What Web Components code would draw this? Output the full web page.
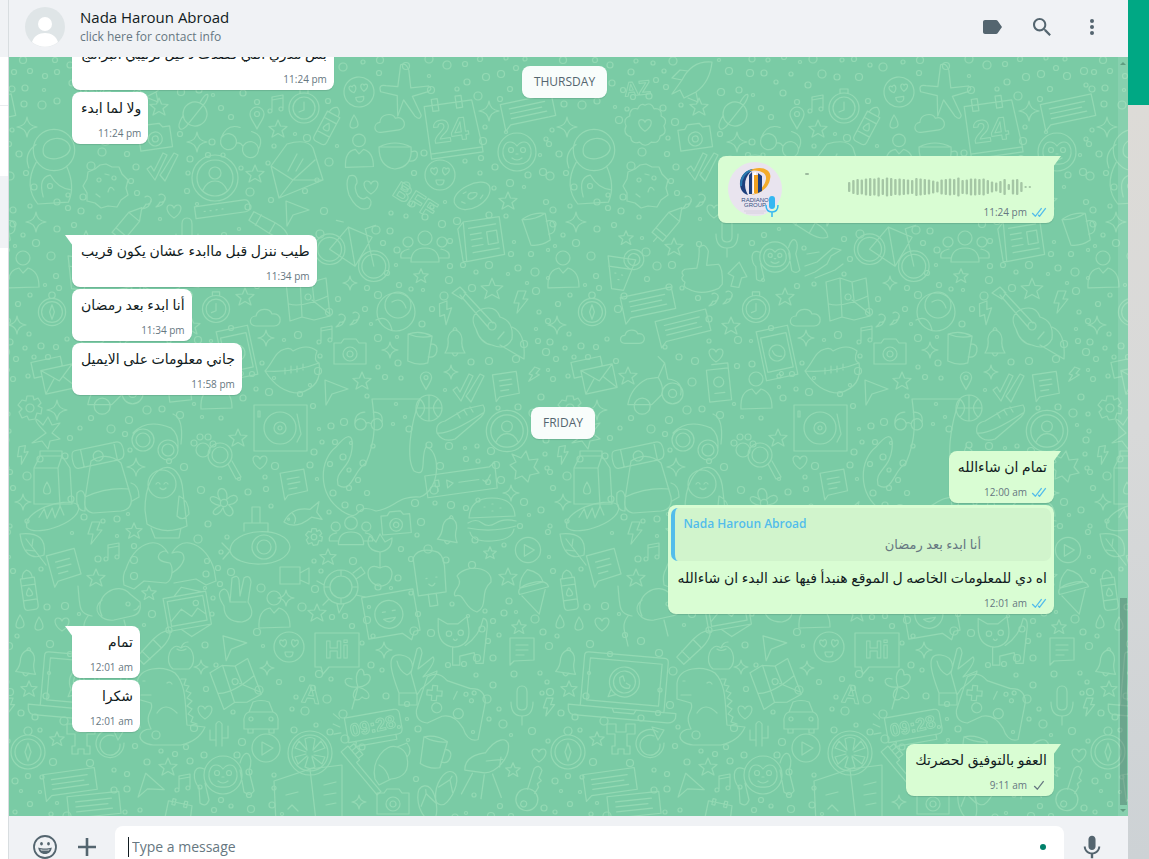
<!DOCTYPE html>
<html lang="en">
<head>
<meta charset="utf-8">
<meta name="viewport" content="width=device-width, initial-scale=1">
<title>Chat</title>
<style>
    body {
        margin: 0;
        overflow: hidden;
        font-family: "Open Sans", "Noto Sans", "DejaVu Sans", sans-serif;
        color: #111b21;
    }
</style>
</head>
<body>
<chat-app>
    <chat-header slot="header" name="Nada Haroun Abroad" info="click here for contact info"></chat-header>

    <chat-message time="11:24 pm">بس مدري اللي قصدت دخيل ترتيبي البرامج</chat-message>
    <chat-message time="11:24 pm">ولا لما ابدء</chat-message>
    <voice-message time="11:24 pm"></voice-message>
    <chat-message time="11:34 pm" first>طيب ننزل قبل ماابدء عشان يكون قريب</chat-message>
    <chat-message time="11:34 pm">أنا ابدء بعد رمضان</chat-message>
    <chat-message time="11:58 pm">جاني معلومات على الايميل</chat-message>
    <day-chip>FRIDAY</day-chip>
    <chat-message time="12:00 am" status="read" out first>تمام ان شاءالله</chat-message>
    <chat-message time="12:01 am" status="read" out>
        <quoted-message slot="quote" author="Nada Haroun Abroad">أنا ابدء بعد رمضان</quoted-message>
        اه دي للمعلومات الخاصه ل الموقع هنبدأ فيها عند البدء ان شاءالله
    </chat-message>
    <chat-message time="12:01 am" first>تمام</chat-message>
    <chat-message time="12:01 am">شكرا</chat-message>
    <chat-message time="9:11 am" status="sent" out first>العفو بالتوفيق لحضرتك</chat-message>

    <day-chip slot="sticky">THURSDAY</day-chip>
    <chat-composer slot="footer"></chat-composer>
</chat-app>

<script>
const template = html => {
    const el = document.createElement('template');
    el.innerHTML = html;
    return el;
};

class BaseElement extends HTMLElement {
    constructor() {
        super();
        this.attachShadow({ mode: 'open' });
        this.shadowRoot.appendChild(this.constructor.template.content.cloneNode(true));
    }
    $(selector) {
        return this.shadowRoot.querySelector(selector);
    }
}

/* ---------- icons ---------- */

const ICONS = {
    label: [24, 24, '<path d="M17.6 5.8C17.3 5.3 16.7 5 16 5H5c-1.1 0-2 .9-2 2v10c0 1.1.9 2 2 2h11c.7 0 1.3-.3 1.6-.8L22 12z"/>'],
    search: [24, 24, '<path d="M15.9 14.3H15l-.3-.3c1-1.1 1.6-2.7 1.6-4.3 0-3.7-3-6.7-6.7-6.7S3 6 3 9.7s3 6.7 6.7 6.7c1.6 0 3.2-.6 4.3-1.6l.3.3v.8l5.1 5.1 1.5-1.5-5-5.2zm-6.2 0c-2.6 0-4.6-2.1-4.6-4.6s2.1-4.6 4.6-4.6 4.6 2.1 4.6 4.6-2 4.6-4.6 4.6z"/>'],
    menu: [24, 24, '<circle cx="12" cy="6" r="2"/><circle cx="12" cy="12" r="2"/><circle cx="12" cy="18" r="2"/>'],
    smile: [24, 24, '<circle cx="12" cy="12" r="11" fill="none" stroke="currentColor" stroke-width="1.8"/><ellipse cx="8.5" cy="8.8" rx="1.4" ry="1.8"/><ellipse cx="15.5" cy="8.8" rx="1.4" ry="1.8"/><path fill-rule="evenodd" d="M5.3 12.5c2 .8 4.3 1.1 6.7 1.1s4.7-.3 6.7-1.1c0 3.8-3 6.5-6.7 6.5s-6.7-2.7-6.7-6.5zm2 1.8.8 1.2h7.8l.8-1.2c-3 .7-6.4.7-9.4 0z"/>'],
    plus: [24, 24, '<path d="M10.7 3h2.6v7.7H21v2.6h-7.7V21h-2.6v-7.7H3v-2.6h7.7z"/>'],
    mic: [24, 24, '<path d="M12 14.94c2 0 3.53-1.53 3.53-3.53V4.35C15.53 2.35 14 .82 12 .82S8.47 2.35 8.47 4.35v7.06c0 2 1.53 3.53 3.53 3.53zm6.24-3.53c0 3.53-2.94 6-6.24 6s-6.24-2.47-6.24-6h-2c0 4 3.18 7.3 7.06 7.89v3.88h2.36V19.3c3.88-.59 7.06-3.89 7.06-7.89z"/>'],
    read: [16, 15, '<path d="M15.01 3.316l-.478-.372a.365.365 0 0 0-.51.063L8.666 9.879a.32.32 0 0 1-.484.033l-.358-.325a.319.319 0 0 0-.484.032l-.378.483a.418.418 0 0 0 .036.541l1.32 1.266c.143.14.361.125.484-.033l6.272-8.048a.366.366 0 0 0-.064-.512zm-4.1 0l-.478-.372a.365.365 0 0 0-.51.063L4.566 9.879a.32.32 0 0 1-.484.033L1.891 7.769a.366.366 0 0 0-.515.006l-.423.433a.364.364 0 0 0 .006.514l3.258 3.185c.143.14.361.125.484-.033l6.272-8.048a.365.365 0 0 0-.063-.51z"/>'],
    sent: [16, 15, '<path transform="translate(2)" d="M10.91 3.316l-.478-.372a.365.365 0 0 0-.51.063L4.566 9.879a.32.32 0 0 1-.484.033L1.891 7.769a.366.366 0 0 0-.515.006l-.423.433a.364.364 0 0 0 .006.514l3.258 3.185c.143.14.361.125.484-.033l6.272-8.048a.365.365 0 0 0-.063-.51z"/>'],
};

class ChatIcon extends BaseElement {
    static template = template(/*html*/`
<style>
    :host { display: inline-flex; }
    svg { display: block; fill: currentColor; }
</style>
<svg aria-hidden="true"></svg>
`);
    connectedCallback() {
        const [w, h, body] = ICONS[this.getAttribute('name')];
        const svg = this.$('svg');
        svg.setAttribute('viewBox', `0 0 ${w} ${h}`);
        svg.setAttribute('width', w);
        svg.setAttribute('height', h);
        svg.innerHTML = body;
    }
}

/* ---------- wallpaper ---------- */

const STAR = 'M0-9 2.5-3 9-2.5 4 1.8 6 8 0 4.5-6 8-4 1.8-9-2.5-2.5-3z';
const HEART = 'M0 7C-9 1-8-6-4-6-1-6 0-3 0-3S1-6 4-6C8-6 9 1 0 7z';
const CIRCLE = (x, y, r) => `M${x - r} ${y}a${r} ${r} 0 1 0 ${2 * r} 0a${r} ${r} 0 1 0 ${-2 * r} 0`;
const FACE = CIRCLE(0, 0, 15) + 'M-5 0C-12-4-9-9-6-6-4-10 0-5-5 0zM5 0C0-5 4-10 6-6 9-9 12-4 5 0zM-4 5H4Q4 10 0 10T-4 5z';
const MONKEY = CIRCLE(0, 0, 19) + 'M0 12C-18 14-17-10-7-10Q-3-10 0-6 3-10 7-10C17-10 18 14 0 12z' +
    CIRCLE(-6, -2, 2.5) + CIRCLE(6, -2, 2.5) + 'M-5 6Q0 10 5 6M-1 2h2';

// each drawing is centred on 0,0
const DOODLES = {
    star: STAR,
    spark: 'M0-10Q1-1 10 0 1 1 0 10-1 1-10 0-1-1 0-10z',
    heart: HEART,
    drop: 'M0-7Q8 5 0 6T0-7z',
    bolt: 'M-3-11H5L2-3H7L-4 11-2 1H-7z',
    pin: 'M0 12C-3 5-7 2-7-3a7 7 0 0 1 14 0C7 2 3 5 0 12z' + CIRCLE(0, -3, 2.5),
    music: 'M-4 6V-7L7-9V4M-4-4 7-6' + CIRCLE(-6, 7, 2) + CIRCLE(5, 5, 2),
    watch: CIRCLE(0, 0, 15) + CIRCLE(0, 0, 11) + 'M0-6V2L-5 4M-4-15V-19H4V-15',
    compass: CIRCLE(0, 0, 17) + CIRCLE(0, 0, 13) + CIRCLE(0, -21, 4) + 'M0-9 3 0 0 9-3 0z',
    planet: CIRCLE(0, 0, 12) + 'M-11-4C-26 6-20 12-10 6L14-6C24-13 20-16 9-8',
    bottle: 'M-7-12H7V16Q7 20 3 20H-3Q-7 20-7 16zM-5-12Q-5-18 0-20 5-18 5-12M-7-5H7M-7 10H7M0-2Q6 6 0 6T0-2z',
    face: FACE,
    plane: 'M-3 25-7 5-24 4Q-28-3-20-3L-8-4-9-26Q-4-30 0-22L5-5 22-10Q28-8 22-4L8 3 20 20Q20 26 14 22L0 8z',
    cloud: 'M-10 8C-18 8-17-2-10-2-8-11 4-10 6-4 16-6 17 8 8 8z',
    calendar: 'M-24-22 24-22 28 26H-24zM-24 26V31H28V26M-16-28h6v12h-6zM8-28h6v12H8z',
    note: 'M-26-11H26V11H-20L-26 16zM-18-5H18M-18 0H14M-18 5H18',
    memo: 'M-12-12H12V10L-8 11-12 15zM-6-5H6M-6 0H6M-6 5H2',
    glasses: CIRCLE(-13, 4, 8) + CIRCLE(10, 8, 8) + 'M-5 4Q-1 2 2 6M-21 2Q-18-14-4-12M18 6Q22-8 8-10',
    envelope: 'M-24-2-8-24Q12-30 18-20L28 12-16 30zM-24-2-2 12 20-8M-16 30-2 12 28 12M-7 3 2-14M1 3 8-9',
    cup: 'M-18-8H14Q16 12-2 14-18 12-18-8zM14-3Q22-6 20 2 18 7 12 6M-18-8Q-2-16 14-8',
    person: CIRCLE(0, -14, 7) + 'M-15 16Q-16-2-4-4L0 1 5-4Q16-1 16 15z',
    group: CIRCLE(0, -10, 7) + CIRCLE(-17, -6, 5) + CIRCLE(17, -6, 5) + 'M-14 14Q-14 0 0 0T14 14zM-14 10H-24Q-26 3-16 1M14 10H24Q26 3 16 1',
    donut: 'M-18 4C-22-10 14-20 19-8 22 8-12 20-18 4zM-4 0Q-4-5 2-4 8-4 4 0-2 4-4 0zM-11 3l3 2M8 3l3-3M-8-5l3-1',
    handset: 'M-11-17Q-3-20-3-10-7-6-2 3 3 8 7 4 14 8 9 15-2 20-11 2-15-10-11-17z',
    monkey: MONKEY,
    monkeyHands: MONKEY + 'M-19-6C-32-12-30 8-24 12L-23 28Q-17 33-14 25L-18 8M17-12C22-30 32-20 26-4L31 16Q27 22 21 17L17-5',
    astronaut: CIRCLE(0, 0, 23) + 'M-12 2C-14-16 16-18 18-2 16 12-12 14-12 2zM-20 14Q-34 40-18 60L16 58Q24 40 14 18M-28 20Q-34 4-20-6M-12 52Q-18 30-4 28 4 42 18 44',
    cookie: 'M0-22 6-19 13-19 16-12 22-6 20 2 22 9 15 14 11 21 2 20-5 22-11 17-19 15-19 7-23 0-19-7-18-14-11-17-6-21z' + CIRCLE(-7, -6, 2) + CIRCLE(8, -8, 2) + 'M2 6Q4-2 8 4M-10 8l4 3M-1-12l4 1',
    badge: 'M0-22Q7-26 10-18 19-19 18-10 26-6 21 1 25 10 17 12 16 21 7 19 0 26-6 19-15 22-16 13-25 10-21 1-25-7-17-10-17-20-8-18-5-25 0-22z' + HEART,
    camera: 'M-16-9H-9L-6-13H6L9-9H16V12H-16z' + CIRCLE(0, 2, 7) + CIRCLE(0, 2, 3),
    rocket: 'M-20 14-10 0Q0-20 20-18 18 2 4 12L-8 18-12 10zM-10 0-20-2-12-10-4-9M4 12 6 22-4 18',
    profile: CIRCLE(0, 0, 23) + CIRCLE(0, 0, 18) + CIRCLE(0, -5, 6) + 'M-12 12Q-8 3 0 3T12 12',
    ruler: 'M-27-6H23Q28-6 28 0T23 6H-27zM-18 0h1M-12 0h1M-6 0h1M0 0h1',
    send: 'M-10-12 13-3-3 2-9 13z',
    bicycle: CIRCLE(-24, -8, 18) + CIRCLE(-24, -8, 14) + CIRCLE(28, 12, 18) + CIRCLE(28, 12, 14) + 'M-24-8-2-34 26-22 6 12-24-8M-2-34 6 12M28 12 18-32 30-36M-8-40-16-42',
    news: 'M-22-20 18-26 24 16-18 24zM-16-13 14-18M-14-6-2-8M-13 0-1-2M-12 7 0 5M4-9 15-11 17 3 6 5zM-11 14 18 9M-22-20-28-12-22 24H-18',
    mug: 'M-12-13Q0-18 12-13L10 14Q0 18-10 14zM-12-13Q0-9 12-13M11-5Q19-6 18 2 17 9 10 8',
    pencil: 'M-18 7-18-7 8-7 20 0 8 7zM8-7V7M-12-7V7M-18 0H-24',
    quotes: 'M-9-5a4 4 0 1 1 1 7Q-9 5-12 7-4 6-3-2M5-7a4 4 0 1 1 1 7Q5 3 2 5 10 4 11-4',
    checks: 'M-16 2-12-1-9 4 0-14 4-12-8 13zM-3 8 0 4 11-14 15-12 2 14z',
    cocktail: 'M-16-14H12L4 18H-8zM-14-4H9' + CIRCLE(10, -14, 10) + CIRCLE(10, -14, 6) + 'M-7 2h1M0 3h1M-3 8h1',
    thumb: 'M-14-2H-2Q2-14 2-22 8-28 11-18L8-4H20Q24 0 22 16L18 20Q0 26-12 18-18 16-15 11-20 7-16 4-19 0-14-2z',
    arrowUp: 'M0-13 10 0 5 2 4 12H-4L-3 2-9 0z',
    mic: 'M-5-13Q-5-19 0-19T5-13V0Q5 5 0 5T-5 0zM-11-3Q-11 11 0 11T11-3M0 11V20',
    wrench: 'M-18 4-6 0 10-14 18-12 8-6 4 2-8 10-18 14M-16-8-4-10M-8 16 12 8 20 2',
    map: 'M-20-18-6-22 6-18 20-22 24 16 8 20-4 17-16 21zM-17 4Q-4 8 22-4M-6-22-4 17M6-18 8 0M6 0 24 14' + CIRCLE(2, -3, 3),
    cap: CIRCLE(0, 0, 19) + CIRCLE(2, -7, 13) + 'M-20 8Q-8 2-4 18M-4-10Q6-16 10-4',
    guitar: 'M-38-30-30-36-24-30-28-24zM-30-28-2 4M-26-31 3 0M-14 6Q-22-8-8-14 6-18 10-6 24-2 22 16 16 28 2 22-10 20-14 6zM22 4Q36 10 34 36L10 22' + CIRCLE(2, 3, 4) + 'M8 16 14 9',
    phone: 'M-16-25H16V25H-16zM-13-18H13V17H-13z' + CIRCLE(0, 21, 2) + CIRCLE(0, 0, 8) + 'M-4-3Q-3 4 4 4',
    lips: 'M-28 6C-20-2-18-14-8-16Q-3-18 0-14 14-22 24-14 20-4 26-2 30 22 6 28-14 28-28 6zM-28 6Q0 8 26-2M-8 3v6M-2 1v7M4 1v6M10-1v6',
    mail: 'M-16-12H16V12H-16zM-16-12 0 2 16-12M-16 12-5-1M16 12 5-1M-16-6H-24V-22H6V-12',
    scooter: 'M-34 22Q-30 0-10-10L4-12Q12 0 8 10L-4 22zM4-12 12-30 4-38M12-30 16-10Q36-8 32 10' + CIRCLE(-16, 24, 10) + CIRCLE(22, 8, 13) + CIRCLE(22, 8, 5),
    card: 'M-11-16H11V16H-11zM-5-21H11V-16' + CIRCLE(0, -3, 5) + 'M-5 8H5',
    bell: 'M-10 10Q-6 4-7-4-6-12 0-13 6-12 7-4 6 4 10 10zM-3 10Q0 16 3 10M-2-13Q0-18 2-13',
    ball: CIRCLE(0, 0, 13) + 'M-13 0H13M0-13V13M-9-9Q0 0-9 9M9-9Q0 0 9 9',
    sneaker: 'M-24 10Q-26 0-16-2L4-14 22-18Q26-12 20-6L-6 16Q-18 20-24 10zM-24 10Q-12 12 22-10M-4-10l3 5M3-13l3 5M9-16l3 5',
    gear: CIRCLE(0, 0, 4) + 'M-3-12H3L4-8 8-10 11-5 8-2 12 0 11 6 7 5 5 11-1 12-3 8-8 10-11 4-8 1-12-3-8-8-4-7z',
    headset: CIRCLE(-14, 4, 11) + CIRCLE(-14, 4, 7) + CIRCLE(11, 14, 10) + CIRCLE(11, 14, 6) + 'M-24-3Q-10-18 14-8M14-8Q22-2 21 12M16-22Q27-18 24 8',
    turntable: 'M-27-23H26V23H-27z' + CIRCLE(-1, 0, 16) + CIRCLE(-1, 0, 6) + CIRCLE(-1, 0, 2) + 'M16-14 20 6 16 14M-23-17h2v6h-2z',
    octopus: 'M-58 42C-84 24-80-10-64-22-56-32-46-40-48-20-50 0-66 2-62 16-48 26-46 0-34-6-22-34-26-54-28-70H20C10-44 6-10 14 2 28 10 20-12 26-22 40-20 42 20 20 28-2 26-6 40-24 42-48 32-36 56-58 42z',
    milk: 'M-18-14-12-26H10L18-14 20 22H-18zM-18-14H6L8 24M6-14 10-26M-12-26V-31H10V-26M-5 0Q2 12-5 12T-5 0z',
    backpack: 'M-16-22Q0-32 14-20L24 14Q26 26 14 28L-14 30Q-24 28-22 16zM-22 14Q0 4 22 6M-30 10Q-24 4-22 14V28Q-32 28-30 10zM24 0Q32 2 32 14L25 18',
    roll: 'M-22-9H20Q26-9 26 0T20 9H-22Q-26 9-26 0T-22-9zM-16-9V9M18-9V9' + CIRCLE(0, 1, 5),
    penguin: 'M-20 10C-20-40 16-46 18-8L22 26Q0 36-18 24zM-14 28-10 38H14L16 28M14-4Q24 0 24 14 18 22 12 16z' + CIRCLE(-3, -16, 14) + 'M-9-16q2-3 4 0M-1-16q2-3 4 0M-5-12q3 3 6 0',
    flower: CIRCLE(0, 0, 4) + 'M-4-3C-14-18 6-22 3-4 14-16 22 0 5 2 18 12 2 22-1 5-8 20-20 10-4 3-22 0-16-14-4-3z',
    magnifier: CIRCLE(0, 0, 12) + CIRCLE(0, 0, 8) + 'M8 9 16 24 21 22 12 6',
    paw: CIRCLE(0, 4, 7) + CIRCLE(-9, -3, 3) + CIRCLE(-3, -9, 3) + CIRCLE(5, -9, 3) + CIRCLE(10, -2, 3),
    bread: 'M-27 8C-30-8 12-20 26-10 32 6-18 20-27 8zM-14-1-8-9-6 1 0-9 2 1 8-10 11-1',
    submarine: 'M-30 4C-30-20 28-22 30 0 28 22-26 22-30 4zM-16-16V-24H8V-16M-8-24V-40H0V-24M-30 4-38-4M-30 4-37 12' + CIRCLE(4, 0, 12) + CIRCLE(4, 0, 7),
    fish: 'M-18 4Q-8-10 10-4L20-10 16 0 20 8 10 4Q-8 14-18 4zM-8-3Q-4 2-8 7' + CIRCLE(-13, 2, 1),
    burger: 'M-23-2Q-22-22 0-22T23-4zM-24 3Q-16-2-10 3T4 3 24 1M-24 8Q0 13 24 6M-22 12Q-20 22 0 21T22 9M-8-13h1M0-16h1M8-12h1M0-9h1',
    voice: 'M-35-11H30L36-15 35 11H-35zM-26-5h4v6h-4zM-24 1V6M-14-4-8 0-14 4zM-2 0H18M22 1l3 3 5-7',
    splash: 'M-14-2-8-5-12-13-3-9 2-16 5-7 14-8 10 0 15 6 6 8 4 15-2 9-9 12-8 4z',
    leaf: 'M-12-13Q16-16 12 8-8 16-12-13zM-6-8 14 18M0-1 1-8M3 4-6 3',
    hands: 'M-2-10C-14-30-36-18-44 6Q-48 12-46 22L-36 26-26 18-4 20C2 18 4 6 0 0Q-16-2-10-10-4-14-2-10zM2-10C14-30 36-18 44 6L46 18 36 22 26 16 4 20M2-10Q14-14 14-4 12 4 2 10',
    tulip: 'M0-8C-16-10-12-22-10-24L-4-18 0-26 5-18 12-22Q12-10 0-8zM0-8V8M0 8C-16 0-16 24 0 26 16 26 16 0 0 8z',
    icepop: 'M-14-22Q-8-32 8-26 16-24 16-10L14 16H-14zM-4 16V28H4V16M-4 0h1M6 0h1M-2 6q3 4 6 0',
    blob: 'M-16-14C-8-26 20-24 18-8 6 2 16 16 4 22-10 18-8 2-18 6-22 0-8-4-16-14z',
    elephant: 'M-36-20C-34 0-36 8-22 10M-12 10C-22-10 4-26 16-12L26-4Q28 8 18 10L0 14C-12 16-24 4-12-6M-26 10C-34 20-28 28-26 40M10 14 14 30' + CIRCLE(14, -2, 2) + 'M20 4q3 0 5-4',
    pictures: 'M-24-17H24V20H-24zM-20-13H20V15H-20zM-20 10-6-2 4 8 12 0 20 8M-12-17-2-26 20-17M-10 20 0 30 24 20' + CIRCLE(11, -6, 3),
    victory: 'M-8 2-6-22Q0-26 1-20L2-4 6-22Q12-26 13-18L10 2Q20 18 4 22-14 22-14 6-22-6-16-10T-8 2zM-8 2H8',
    video: 'M-14-9H6V8H-14zM6-3 15-8V8L6 4',
    turtle: CIRCLE(0, 0, 17) + CIRCLE(0, 0, 11) + 'M-17-2-24-6M12-14 20-20 24-14 15-8M15 8 24 10M-4 17-2 26 3 17M-12 12-18 18M11 0h6M-11 0h-6M0-11v-6M0 11v6',
    emojiChat: 'M-26-22H26V20H20L16 28 8 20H-26z' + CIRCLE(-2, -1, 14) + 'M-8-4h3M2-4h3M-8 3Q-2 10 4 3z',
    cat: 'M-22-14-22-24-12-18H0L10-26 12-12Q14 6-4 8-22 6-22-14zM8 6Q24-4 28-24 34-24 32-10L28 26H20L18 14 2 18V28H-6V8' + CIRCLE(-10, -7, 3) + CIRCLE(3, -8, 3) + 'M-5-1q2 3 4 0',
    crayon: 'M-18 5V-5L6-6Q20-6 24 0 20 6 6 6zM6-6V6M-10-6V6',
    apple: 'M0-8C-10-16-18 6-8 13H8C18 6 10-16 0-8zM0-8Q2-14 7-14M-4-7Q0-4 5-7',
    speech: 'M-22-17H22V17H-8L-14 24-16 17H-22z',
    okHand: 'M-14 20C-24-6-26-20-12-18 2-16 2-2-6 2Q-14-2-16-12M-2 0 4-24Q8-28 9-20L5-4 20-16Q24-12 10 4L24-2Q24 4 8 16L4 22zM-14 20H4V32H-14z',
    clover: 'M0 0C-6-16 6-24 6-12 16-16 14 0 0 0 16 4 12 16 4 10-2 18-10 8 0 0-16 2-16-12-6-8M0 0-6 22',
    gamepad: 'M-26-26Q-16-34-6-24L18-18Q32-20 34-6L30 32Q20 36 14 22 4 8-8 12L-22 20Q-34 20-34 8zM-20-18h5v5h5v5h-5v5h-5v-5h-5v-5h5z' + CIRCLE(-14, 4, 5) + CIRCLE(8, 8, 5) + CIRCLE(20, -6, 2) + CIRCLE(14, -12, 2) + CIRCLE(22, -14, 2) + 'M2-6 5-14',
    dino: 'M-28-14C-26-30-2-32 10-24 22-12 20 10 22 28L40 30Q34 44 16 48H-12C-30 46-28 32-14 32-22 16-10 14-14 6L-28 2zM-24-2H-14M16-18l5 0-2 6 5 1-3 5 5 2-4 5 5 3-5 5 5 3-4 5 5 3-2 5 6 2M-8 16Q0 4 12 16M-22-16h2M2-14q3-2 5 1',
    car: 'M-17 6Q-18-3-12-5L-8-15Q0-18 8-15L12-5Q18-3 17 6V12H-17zM-12-5H12M-13 12V16H-8V12M8 12V16H13V12' + CIRCLE(-10, 2, 2) + CIRCLE(10, 2, 2),
    clock: 'M-28-12H22Q27-12 27-7V8Q27 13 22 13H-28zM-20 13-22 18H20V13M-40-8-34-4M-41 2H-34M-38-18-33-12',
    laptop: 'M-38-32H38Q42-32 42-28V22H-42V-28Q-42-32-38-32zM-36-26H36V16H-36zM-54 22H-10L-8 26H12L14 22H54V27Q52 32 46 32H-48Q-54 32-54 22z' + CIRCLE(0, -5, 15) + CIRCLE(0, -5, 11) + 'M-13 4-15 11-7 8M-5-9Q-5 2 5 1L6-2 2-4M-5-9-2-11 0-6',
    robot: 'M-14-16H-5V-8H5V-16H14V-6H6V6H9V14H3V9H-3V14H-9V6H-6V-6H-14z',
    refresh: 'M8-13A14 14 0 1 0 14-2M10-1A10 10 0 1 1 4-9M2-18 14-15 8-5z',
    chair: 'M-20 10C-22-4-8-8-2-10 6-26 18-30 20-20 22-8 12 8 0 10zM0-2 16-6M-12 12-20 34M0 12V36M8 10 20 32M14 2 14-8',
    key: CIRCLE(0, 12, 11) + CIRCLE(-2, 17, 3) + 'M-2 2-1-20Q3-26 7-20L6-12 9-10 6-6 8-3 6 4',
    croissant: 'M-18 14C-22-4-8-22 4-18L14-22Q20-14 14-8 18 12-2 14L-14 20zM-14 0Q-6 4-4 14M4-18Q12-16 14-8',
    brush: 'M-26-14H-8V-10H30V-5H-26zM-24-14V-20H-10V-14M-20-14V-20M-15-14V-20',
    flop: 'M-7 14C-12 0-6-18 3-16 12-14 10 4 5 14 2 20-5 20-7 14zM-7 2 2-8 8 4M2-8 3-12',
    book: 'M-36-14 0-26 32-30V28H-34zM0-26 6 26M-24 0-12-3M-22 14l4-4 6 6M14-10 26-13M14 0 26-2M16 10 26 8',
    orange: CIRCLE(0, 0, 22) + CIRCLE(0, 0, 18) + 'M-3-3-5-14Q0-17 5-14L3-3M3-3 11-12 15-5 4-1M4 2 15 4 12 11 2 3M2 4 5 14Q0 17-5 14L-2 4M-3 3-12 11-15 4-4 1M-4-1-15-5-11-12-3-3',
    play: CIRCLE(0, 0, 14) + 'M-4-6 7 0-4 7z',
    cactus: 'M-3 14V-8Q0-13 3-8V14M-3 8H-9V-2M3 6H9V-6',
    butterfly: 'M0 0C-14-14-12-18-3-8L2-16 6-8 14-10 6 0 14 6 4 8 2 16-4 8-14 10z',
    cone: 'M-12-2Q-10-12 0-18 12-12 12-2zM-14 4Q-16-4 0-4T16 4zM-12 6 0 28 12 6',
};

// name, x, y, rotation, scale
const PLACED = `
planet 186 57 -25|pin 248 60|music 267 47|watch 295 51|bottle 319 68 28|drop 345 65|face 350 35 -8|plane 396 35 10|cloud 381 66 -8|calendar 442 68 -8|spark 480 54|note 519 53 -12|glasses 233 83 10|star 269 72|spark 188 85|envelope 286 111|cup 388 98|person 350 96 0 .9|face 431 118|donut 463 140 -10|handset 351 136|monkey 508 95|astronaut 45 93 0 .9|cookie 97 129|badge 96 68 0 .9|camera 146 80 -8|spark 18 70|rocket 143 23|star 150 50|profile 206 121|star 246 117|ruler 213 152 -8|send 287 156|heart 165 154|heart 362 130|star 499 144|news 474 183 0 .9|mug 528 172 -15|spark 27 165|pencil 120 166 -50|quotes 145 145|checks 154 110|crayon 258 168 30
person 14 215|cocktail 73 215 8|thumb 150 213 -5|arrowUp 188 218 10|mic 178 180|monkeyHands 226 200 0 .8|wrench 274 205|bicycle 341 199 0 .85|group 416 191|compass 43 255 0 .8|note 99 246 -12|note 134 269 -14|quotes 172 242|watch 207 252 0 .9|star 236 240|star 182 269|star 125 190|star 77 181 0 .8|cloud 257 261|map 297 243|quotes 339 263|cap 387 255|guitar 481 266|star 483 232 0 1.2|star 412 219 0 .8|bolt 437 256 -20|bolt 512 245|cloud 84 280 0 .8|phone 228 296 -12|lips 284 308|music 316 278|camera 341 295|mug 410 291 5|bell 446 286|pin 417 323 0 .8|mail 50 322 -12|star 79 319|scooter 106 330 0 .8|card 170 328 -6|person 207 336|heart 167 298|star 353 324|send 326 335|checks 460 331|memo 497 328 -8|bolt 525 318 20 .7|spark 341 226 0 .7|spark 257 281 0 .8|spark 381 293 0 .8|spark 8 268 0 .9|spark 442 315 0 .7
gear 21 351|spark 48 353|butterfly 37 376|headset 148 379|turntable 272 371|octopus 391 412|glasses 360 363 -10 .7|ball 420 351|sneaker 452 366|profile 498 374 0 .9|bolt 14 398 -10 .8|milk 43 425|roll 89 398 -12|backpack 98 426|penguin 156 443|flower 215 446 0 .9|magnifier 211 398|paw 194 389|star 229 381|heart 251 405|memo 285 426 -10|spark 127 410 0 .9|spark 14 445 0 .8|bread 44 460 -5|submarine 251 490|fish 292 458 -10|group 342 475 0 .9|camera 387 466 -5 .9|bell 440 474 10|burger 483 463|voice 452 425 -8|spark 502 436 0 .8|splash 515 410|leaf 23 490|bolt 86 476|star 125 474 0 .9|memo 55 509 -15 1.2|star 87 521|hands 161 506|music 103 495|gear 305 480 0 .7|star 319 500 0 .9|tulip 371 503|icepop 421 521 -8|blob 464 533|star 499 520|star 481 496 0 .7|play 519 493 0 .9|bottle 20 533 -8|elephant 105 549|star 140 536 0 .8|pictures 178 553 -10 .9|victory 229 543|person 265 555|video 285 519|turtle 332 530|spark 277 541 0 .8|star 308 556|emojiChat 382 558 -10|cone 523 530 -15|drop 11 565|drop 30 567|heart 53 567
cat 449 583 0 .9|star 510 570 0 .8|memo 513 593|bell 18 606 8|crayon 144 591 -45|apple 172 599|send 225 590 -5|face 280 590|speech 328 593|spark 375 593 0 .8|okHand 404 616|map 225 628 -15|spark 192 610 0 .7|spark 258 611 0 .7|clover 349 630|gamepad 442 648 5|mic 513 648|dino 156 640|heart 196 655|car 252 660|clock 365 668 -10|laptop 75 630 5|star 20 632 0 .9|bolt 540 650 0 .8|compass 19 695|star 48 682 0 .8|robot 72 683|refresh 101 688|heart 530 698|chair 477 706 8|key 521 731 15|mug 424 695 12|croissant 384 708|brush 345 718 50|camera 384 745|flop 437 730 15|flop 418 745 -20|star 504 713 0 .8|spark 350 745 0 .7|book 301 738|orange 301 696|play 257 691|monkeyHands 214 718|star 159 710|music 174 726|send 142 731 20|note 61 725 -8|note 85 748 -6|calendar 169 757 12 .5|cactus 210 675`
    .trim().split(/[|\n]/).map(row => {
        const [name, x, y, rot = 0, scale = 1] = row.split(' ');
        return { name, x: +x, y: +y, rot, scale };
    });

const LETTERING = [
    ['24', 443, 84, 32, -8],
    ['BFF', 402, 150, 24, 32],
    ['AZ', 89, 38, 20, -6],
    ['Hi', 328, 601, 24, 0],
    ['09:28', 365, 675, 18, -12],
    ['A', 301, 646, 26, 6],
];

const TILE_W = 540;
const TILE_H = 760;

class DoodleWallpaper extends BaseElement {
    static template = template(/*html*/`
<style>
    :host { display: block; background: #7acba5; }
    svg { display: block; width: 100%; height: 100%; }
    .ink { fill: none; stroke: #93d9b3; stroke-width: 1.2; stroke-linejoin: round; stroke-linecap: round; }
    path { vector-effect: non-scaling-stroke; }
    text { font: 700 20px "Liberation Sans", sans-serif; stroke-width: 1; }
</style>
<svg aria-hidden="true">
    <defs><pattern id="doodles" patternUnits="userSpaceOnUse"><g class="ink"></g></pattern></defs>
    <rect width="100%" height="100%" fill="url(#doodles)"/>
</svg>
`);
    connectedCallback() {
        const pattern = this.$('pattern');
        pattern.setAttribute('width', TILE_W);
        pattern.setAttribute('height', TILE_H);
        const tile = this.#drawings() + this.#bubbles();
        // neighbours drawn too, so that shapes run over the seams
        this.$('.ink').innerHTML = [-TILE_W, 0, TILE_W].map(x => `<g transform="translate(${x})">${tile}</g>`).join('');
    }
    #drawings() {
        const paths = PLACED.map(d => `<path d="${DOODLES[d.name]}" transform="translate(${d.x} ${d.y}) rotate(${d.rot}) scale(${d.scale})"/>`);
        const words = LETTERING.map(([word, x, y, size, rot]) => `<text x="${x}" y="${y}" text-anchor="middle" style="font-size:${size}px" transform="rotate(${rot} ${x} ${y})">${word}</text>`);
        return paths.concat(words).join('');
    }
    // small circles scattered in the room that is left
    #bubbles() {
        const big = /astronaut|bicycle|guitar|dino|laptop|gamepad|octopus|hands|turntable|scooter|calendar|elephant|penguin|backpack|submarine|book|chair/;
        const taken = PLACED.map(d => [d.x, d.y, big.test(d.name) ? 31 : /star|spark|heart|drop|music|bolt|pin|quotes/.test(d.name) ? 11 : 20]);
        let seed = 7;
        const random = () => (seed = (seed * 16807) % 2147483647) / 2147483647;
        let out = '';
        for (let i = 0; i < 6000; i++) {
            const x = Math.round(random() * TILE_W);
            const y = Math.round(random() * TILE_H);
            const r = 1.5 + Math.round(random() * 5) / 2;
            if (taken.some(([tx, ty, tr]) => Math.hypot(tx - x, ty - y) < tr + r + 1)) continue;
            taken.push([x, y, r + 6]);
            out += `<circle cx="${x}" cy="${y}" r="${r}"/>`;
        }
        return out;
    }
}

/* ---------- header ---------- */

class ChatHeader extends BaseElement {
    static template = template(/*html*/`
<style>
    :host {
        display: flex;
        align-items: center;
        height: 57px;
        box-sizing: border-box;
        padding: 0 24px 4px 16px;
        background: #f0f2f5;
    }
    .avatar { width: 40px; height: 40px; margin-right: 15px; }
    .who { flex: 1; min-width: 0; }
    h1 { margin: 0; font-size: 15px; line-height: 20px; font-weight: 400; }
    p { margin: 0; font-size: 12px; line-height: 20px; color: #667781; }
    nav { display: flex; gap: 26px; }
    button { display: flex; padding: 0; border: 0; background: none; color: #54656f; }
</style>
<svg class="avatar" viewBox="0 0 40 40" role="img" aria-label="Profile photo">
    <circle cx="20" cy="20" r="20" fill="#dfe5e7"/>
    <circle cx="20" cy="17" r="7" fill="#fff"/>
    <path d="M7 35C9 29 14 26 20 26s11 3 13 9a20 20 0 0 1-26 0z" fill="#fff"/>
</svg>
<div class="who"><h1></h1><p></p></div>
<nav>
    <button type="button" aria-label="Labels"><chat-icon name="label"></chat-icon></button>
    <button type="button" aria-label="Search"><chat-icon name="search"></chat-icon></button>
    <button type="button" aria-label="Menu"><chat-icon name="menu"></chat-icon></button>
</nav>
`);
    connectedCallback() {
        this.$('h1').textContent = this.getAttribute('name');
        this.$('p').textContent = this.getAttribute('info');
    }
}

/* ---------- messages ---------- */

const bubbleStyle = /*css*/`
    :host {
        display: block;
        position: relative;
        flex-shrink: 0;
        align-self: flex-start;
        box-sizing: border-box;
        min-width: 68px;
        margin-top: 2px;
        background: #fff;
        border-radius: 8px;
        box-shadow: 0 1px 1px rgba(11, 20, 26, .13);
    }
    :host([first]) { margin-top: 12px; border-top-left-radius: 0; }
    :host([out]) { align-self: flex-end; background: #d9fdd3; }
    :host([out][first]) { border-radius: 8px 0 8px 8px; }
    :host([first])::before {
        content: "";
        position: absolute;
        top: 0;
        left: -7px;
        width: 8px;
        height: 11px;
        background: inherit;
        clip-path: polygon(0 0, 100% 0, 100% 100%);
    }
    :host([out][first])::before {
        left: auto;
        right: -7px;
        clip-path: polygon(0 0, 100% 0, 0 100%);
    }
    .meta {
        display: flex;
        justify-content: flex-end;
        align-items: center;
        gap: 4px;
        font-size: 10px;
        line-height: 15px;
        color: #667781;
    }
    .meta chat-icon[name=read] { color: #53bdeb; }
`;

class ChatMessage extends BaseElement {
    static template = template(/*html*/`
<style>
    ${bubbleStyle}
    .text {
        padding: 6px 7px 8px 9px;
        font-size: 14px;
        line-height: 20px;
        text-align: right;
    }
    .meta { padding: 0 7px 3px 9px; }
    ::slotted([slot=quote]) { margin: 0 3px; }
    .quote { display: flow-root; }
    .quote.filled { padding: 3px 0 1px; }
</style>
<div class="quote"><slot name="quote"></slot></div>
<div class="text" dir="rtl"><slot></slot></div>
<div class="meta"><time></time></div>
`);
    connectedCallback() {
        this.$('time').textContent = this.getAttribute('time');
        this.$('.quote').classList.toggle('filled', !!this.querySelector('[slot=quote]'));
        const status = this.getAttribute('status');
        if (!status) return;
        const icon = document.createElement('chat-icon');
        icon.setAttribute('name', status);
        this.$('.meta').appendChild(icon);
    }
}

class QuotedMessage extends BaseElement {
    static template = template(/*html*/`
<style>
    :host {
        display: block;
        padding: 5px 70px 6px 8px;
        background: #d1f4cc;
        border-left: 4px solid #53bdeb;
        border-radius: 7px;
        overflow: hidden;
    }
    b { display: block; font-size: 12px; line-height: 21px; font-weight: 600; color: #53bdeb; }
    div { font-size: 13px; line-height: 21px; color: #667781; text-align: right; }
</style>
<b></b>
<div dir="rtl"><slot></slot></div>
`);
    connectedCallback() {
        this.$('b').textContent = this.getAttribute('author');
    }
}

const WAVE = [10, 14, 16, 15, 17, 18, 17, 19, 16, 19, 18, 16, 17, 16, 15, 14, 18, 17, 16, 15, 13, 11, 15, 16, 17, 16, 19, 14, 15, 17, 17, 16, 17, 14, 11, 9, 12, 16, 6, 15, 16, 10, 2, 2];

class VoiceMessage extends BaseElement {
    static template = template(/*html*/`
<style>
    ${bubbleStyle}
    :host {
        display: flex;
        width: 336px;
        height: 67px;
        padding: 6px 7px 3px 10px;
    }
    .cover { width: 55px; height: 55px; }
    .body { flex: 1; display: flex; flex-direction: column; }
    .track { flex: 1; display: flex; align-items: center; justify-content: space-between; padding: 0 15px 0 22px; }
    .knob { width: 4px; height: 2px; margin-bottom: 20px; border-radius: 1px; background: #9dba9e; }
    .wave { display: block; width: 184px; height: 20px; margin-top: 6px; }
</style>
<svg class="cover" viewBox="0 0 55 55" aria-hidden="true">
    <circle cx="27" cy="27" r="27" fill="#e9e4ef"/>
    <path d="M20 33C9 30 9 12 22 8l4-1C16 14 15 24 20 33z" fill="#1d3f7d"/>
    <path d="M13 24c0-8 4-14 11-16" fill="none" stroke="#2a7ab0" stroke-width="2"/>
    <path d="M21 9C30 3 45 6 42 17c-1 8-9 15-19 16 8-3 14-9 15-16 1-7-8-10-17-8z" fill="#f4ac29"/>
    <path d="M21 13l3-3v22h-3z" fill="#1d3f7d"/>
    <path d="M25 11l3-1v21h-3z" fill="#fff"/>
    <path d="M26 13h4v18h-4z" fill="#f0a01f"/>
    <path d="M30 11l4 3v15l-4 2z" fill="#1d3f7d"/>
    <text x="27" y="40" text-anchor="middle" font-family="Liberation Sans" font-size="6" fill="#33507f">RADIANO</text>
    <text x="27" y="45" text-anchor="middle" font-family="Liberation Sans" font-size="6" fill="#33507f">GROUP</text>
    <path d="M16 49h22M18 51h18" stroke="#d6d0de"/>
    <rect x="41" y="34" width="6" height="13" rx="3" fill="#34b7f1"/>
    <path d="M38 43q0 7 6 7t6-7M44 50v5" fill="none" stroke="#34b7f1" stroke-width="1.5"/>
</svg>
<div class="body">
    <div class="track"><span class="knob"></span><svg class="wave" viewBox="0 0 184 20" aria-hidden="true"></svg></div>
    <div class="meta"><time></time><chat-icon name="read"></chat-icon></div>
</div>
`);
    connectedCallback() {
        this.toggleAttribute('out', true);
        this.toggleAttribute('first', true);
        this.$('time').textContent = this.getAttribute('time');
        this.$('.wave').innerHTML = WAVE.map((h, i) =>
            `<rect x="${(i * 4.2).toFixed(1)}" y="${10 - h / 2}" width="2.4" height="${h}" rx="1" fill="#a5c6a5"/>`).join('');
    }
}

class DayChip extends BaseElement {
    static template = template(/*html*/`
<style>
    :host {
        display: block;
        flex-shrink: 0;
        align-self: center;
        margin-top: 12px;
        padding: 6px 12px;
        border-radius: 8px;
        background: rgba(255, 255, 255, .95);
        box-shadow: 0 1px 1px rgba(11, 20, 26, .13);
        font-size: 12px;
        line-height: 20px;
        color: #54656f;
    }
</style>
<slot></slot>
`);
}

/* ---------- composer ---------- */

class ChatComposer extends BaseElement {
    static template = template(/*html*/`
<style>
    :host {
        display: flex;
        align-items: center;
        height: 62px;
        box-sizing: border-box;
        padding: 0 24px;
        background: #f0f2f5;
    }
    button { display: flex; padding: 0; border: 0; background: none; color: #54656f; }
    .plus { margin: 0 16px 0 18px; }
    label {
        flex: 1;
        display: flex;
        align-items: center;
        height: 42px;
        margin-right: 16px;
        padding: 0 18px 0 13px;
        background: #fff;
        border-radius: 8px;
    }
    .caret { width: 1px; height: 20px; margin-right: 3px; background: #111b21; }
    input {
        flex: 1;
        min-width: 0;
        padding: 0;
        border: 0;
        outline: 0;
        background: none;
        font: inherit;
        font-size: 14px;
        line-height: 20px;
    }
    input::placeholder { color: #667781; opacity: 1; }
    .dot { width: 6px; height: 6px; border-radius: 50%; background: #00806a; }
</style>
<button type="button" aria-label="Emoji"><chat-icon name="smile"></chat-icon></button>
<button type="button" class="plus" aria-label="Attach"><chat-icon name="plus"></chat-icon></button>
<label>
    <span class="caret"></span>
    <input type="text" placeholder="Type a message" aria-label="Type a message">
    <span class="dot"></span>
</label>
<button type="button" aria-label="Record voice message"><chat-icon name="mic"></chat-icon></button>
`);
}

/* ---------- shell ---------- */

class ChatApp extends BaseElement {
    static template = template(/*html*/`
<style>
    :host { display: flex; height: 100vh; background: #fff; }
    .list {
        width: 8px;
        display: flex;
        flex-direction: column;
        border-right: 1px solid #d8dde0;
    }
    .list .bar { height: 57px; background: #f0f2f5; }
    .list .row { height: 48px; border-bottom: 1px solid #e9edef; }
    .list .row + .row { height: 70px; border: 0; }
    .list .selected { height: 72px; background: #f0f2f5; }
    main { flex: 1; min-width: 0; display: flex; flex-direction: column; }
    .chat { flex: 1; min-height: 0; position: relative; display: flex; overflow: hidden; }
    doodle-wallpaper { position: absolute; inset: 0; }
    .messages {
        flex: 1;
        min-width: 0;
        position: relative;
        display: flex;
        flex-direction: column;
        justify-content: flex-end;
        padding: 0 64px 20px 63px;
    }
    .sticky { position: absolute; top: -3px; left: 0; right: 8px; display: flex; justify-content: center; }
    .scrollbar {
        position: relative;
        width: 10px;
        display: flex;
        flex-direction: column;
        align-items: center;
        justify-content: flex-end;
        background: rgba(255, 255, 255, .1);
    }
    .thumb { width: 7px; height: 207px; background: rgba(11, 20, 26, .22); }
    .arrow { border: 3px solid transparent; }
    .up { border-bottom-color: #5f9d80; margin: 2px 0 auto; }
    .down { border-top-color: #5f9d80; margin: 4px 0 1px; }
    footer { height: 43px; overflow: hidden; background: #f0f2f5; }
    .edge { width: 21px; background: linear-gradient(#00a884 105px, #dddbd7 105px, #d8d9d9 50%, #cdd2d5); }
</style>
<div class="list">
    <div class="bar"></div><div class="row"></div><div class="row"></div><div class="selected"></div>
</div>
<main>
    <slot name="header"></slot>
    <div class="chat">
        <doodle-wallpaper></doodle-wallpaper>
        <div class="messages"><slot></slot></div>
        <div class="sticky"><slot name="sticky"></slot></div>
        <div class="scrollbar"><span class="arrow up"></span><span class="thumb"></span><span class="arrow down"></span></div>
    </div>
    <footer><slot name="footer"></slot></footer>
</main>
<div class="edge"></div>
`);
}

customElements.define('chat-icon', ChatIcon);
customElements.define('doodle-wallpaper', DoodleWallpaper);
customElements.define('chat-header', ChatHeader);
customElements.define('chat-message', ChatMessage);
customElements.define('quoted-message', QuotedMessage);
customElements.define('voice-message', VoiceMessage);
customElements.define('day-chip', DayChip);
customElements.define('chat-composer', ChatComposer);
customElements.define('chat-app', ChatApp);
</script>
</body>
</html>
